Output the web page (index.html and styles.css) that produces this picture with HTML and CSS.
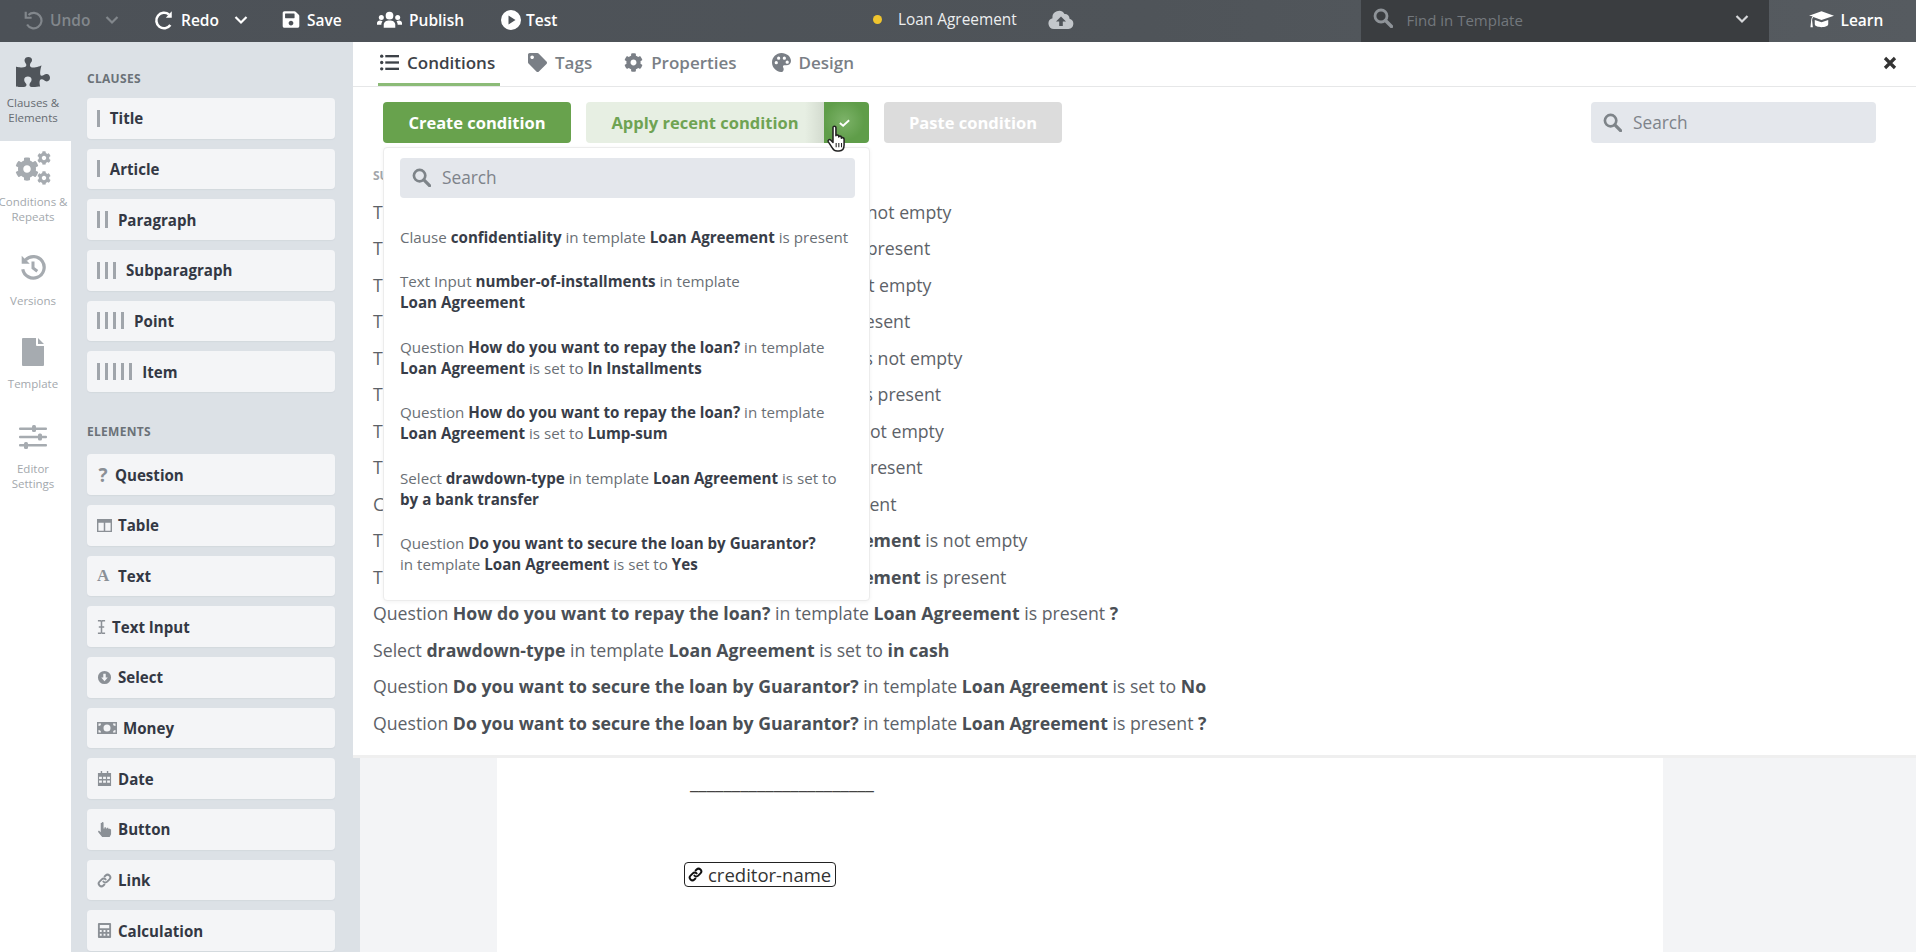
FILE: index.html
```html
<!DOCTYPE html>
<html lang="en">
<head>
<meta charset="utf-8">
<title>Loan Agreement</title>
<link rel="stylesheet" href="styles.css">
</head>
<body>
<svg class="defs" aria-hidden="true">
  <symbol id="i-search" viewBox="0 0 20 20"><circle cx="8" cy="8" r="6" fill="none" stroke="currentColor" stroke-width="2.8"/><path d="M12.5 12.5L18.5 18.5" stroke="currentColor" stroke-width="3.4" stroke-linecap="round"/></symbol>
  <symbol id="i-chev" viewBox="0 0 14 10"><path d="M1.5 2l5.5 5.5L12.500 2" fill="none" stroke="currentColor" stroke-width="2.2"/></symbol>
  <symbol id="i-cog" viewBox="0 0 512 512"><path d="M487.4 315.7l-42.600-24.600c4.300-23.200 4.300-47 0-70.200l42.600-24.600c4.900-2.800 7.100-8.600 5.500-14-11.100-35.600-30-67.800-54.700-94.600-3.800-4.100-10-5.100-14.800-2.300L380.800 110c-17.900-15.400-38.500-27.300-60.800-35.100V25.800c0-5.600-3.900-10.500-9.400-11.700-36.700-8.200-74.300-7.800-109.200 0-5.500 1.200-9.400 6.100-9.400 11.700V75c-22.200 7.900-42.800 19.800-60.800 35.100L88.700 85.500c-4.900-2.800-11-1.900-14.800 2.300-24.700 26.700-43.600 58.900-54.700 94.600-1.700 5.400.6 11.200 5.500 14L67.300 221c-4.300 23.200-4.300 47 0 70.200l-42.600 24.600c-4.900 2.800-7.100 8.600-5.500 14 11.100 35.600 30 67.800 54.700 94.600 3.800 4.100 10 5.100 14.800 2.300l42.600-24.600c17.900 15.400 38.500 27.300 60.800 35.100v49.200c0 5.600 3.900 10.500 9.400 11.700 36.700 8.200 74.300 7.800 109.200 0 5.500-1.200 9.400-6.100 9.400-11.700v-49.200c22.200-7.900 42.800-19.800 60.800-35.100l42.600 24.600c4.900 2.800 11 1.900 14.800-2.300 24.700-26.700 43.600-58.900 54.700-94.600 1.500-5.500-.7-11.300-5.600-14.100zM256 336c-44.100 0-80-35.900-80-80s35.900-80 80-80 80 35.900 80 80-35.900 80-80 80z" fill="currentColor"/></symbol>
  <symbol id="i-link" viewBox="0 0 20 20"><g fill="none" stroke="currentColor" stroke-width="2.600" stroke-linecap="round"><path d="M8.500 11.500a3.600 3.600 0 0 0 5.100 0l3-3a3.600 3.600 0 0 0-5.100-5.100l-1.300 1.300"/><path d="M11.500 8.500a3.600 3.600 0 0 0-5.100 0l-3 3a3.600 3.600 0 0 0 5.100 5.100l1.300-1.300"/></g></symbol>
</svg>

<header class="topbar">
  <div class="tb-group tb-undo">
    <svg class="ic-undo" viewBox="0 0 22 22"><path d="M6 5.500A8.500 8.500 0 1 1 4.500 16" fill="none" stroke="currentColor" stroke-width="2.400"/><path d="M3 2v6.500h6.500" fill="none" stroke="currentColor" stroke-width="2.400"/></svg>
    <span>Undo</span>
    <svg class="ic-chev"><use href="#i-chev"/></svg>
  </div>
  <div class="tb-group tb-redo">
    <svg class="ic-undo" viewBox="0 0 22 22"><path d="M16.500 5A8.500 8.500 0 1 0 18 16.500" fill="none" stroke="currentColor" stroke-width="2.800"/><path d="M19.500 1.500v7H13z" fill="currentColor"/></svg>
    <span>Redo</span>
    <svg class="ic-chev"><use href="#i-chev"/></svg>
  </div>
  <div class="tb-group tb-save">
    <svg class="ic-save" viewBox="0 0 448 512"><path fill="currentColor" d="M433.941 129.941l-83.882-83.882A48 48 0 0 0 316.118 32H48C21.490 32 0 53.490 0 80v352c0 26.510 21.490 48 48 48h352c26.510 0 48-21.490 48-48V163.882a48 48 0 0 0-14.059-33.941zM224 416c-35.346 0-64-28.654-64-64 0-35.346 28.654-64 64-64s64 28.654 64 64c0 35.346-28.654 64-64 64zm96-304.520V212c0 6.627-5.373 12-12 12H76c-6.627 0-12-5.373-12-12V108c0-6.627 5.373-12 12-12h228.520c3.183 0 6.235 1.264 8.485 3.515l3.480 3.480A11.996 11.996 0 0 1 320 111.480z"/></svg>
    <span>Save</span>
  </div>
  <div class="tb-group tb-publish">
    <svg class="ic-users" viewBox="0 0 26 18"><g fill="currentColor"><circle cx="13" cy="4.500" r="4"/><circle cx="4.500" cy="6.500" r="2.600"/><circle cx="21.500" cy="6.500" r="2.600"/><path d="M7 17v-3c0-3 2.500-4.500 6-4.500s6 1.500 6 4.500v3z"/><path d="M0 14v-2c0-1.500 1.500-2.500 3-2.500 1 0 2 .3 2.700 1-.8.8-1.200 2-1.200 3.500zM26 14v-2c0-1.500-1.500-2.500-3-2.500-1 0-2 .3-2.700 1 .8.8 1.200 2 1.200 3.500z"/></g></svg>
    <span>Publish</span>
  </div>
  <div class="tb-group tb-test">
    <svg class="ic-play" viewBox="0 0 20 20"><path fill="currentColor" fill-rule="evenodd" d="M10 0a10 10 0 1 1 0 20a10 10 0 1 1 0-20zM7.500 5.500v9l7-4.500z"/></svg>
    <span>Test</span>
  </div>
  <div class="tb-doc">
    <i class="dot"></i>
    <span class="doc-name">Loan Agreement</span>
    <svg class="ic-cloud" viewBox="0 0 26 20"><path fill="currentColor" fill-rule="evenodd" d="M6 19a5.500 5.500 0 0 1-1.500-10.800A6.500 6.500 0 0 1 16.500 4 4.500 4.500 0 0 1 21.500 8.800 5.200 5.200 0 0 1 20.500 19zM13 6.500l-5 5h3.200v4.500h3.600v-4.500H18z"/></svg>
  </div>
  <div class="tb-find">
    <svg class="ic-find"><use href="#i-search"/></svg>
    <span class="find-text">Find in Template</span>
    <svg class="ic-chev find-chev"><use href="#i-chev"/></svg>
  </div>
  <div class="tb-learn">
    <svg class="ic-cap" viewBox="0 0 26 20"><path fill="currentColor" d="M13 1L26 5.500 13 10 4.500 7c-.8.8-1.200 1.800-1.300 3l.8 7.500H1.500l.8-7.500c.1-1.500.6-2.800 1.500-3.800L0 5.500zM6 10l7 2.400 7-2.400v4.500c0 1.700-3.500 3-7 3s-7-1.300-7-3z"/></svg>
    <span>Learn</span>
  </div>
</header>

<div class="workspace">
  <nav class="rail">
    <div class="rail-item rail-active">
      <svg class="ic-puzzle" viewBox="0 0 576 512"><path fill="currentColor" d="M519.442 288.651c-41.519 0-59.500 31.593-82.058 31.593C377.409 320.244 432 144 432 144s-196.288 80-196.288-3.297c0-35.827 36.288-46.250 36.288-85.985C272 19.216 243.885 0 210.539 0c-34.654 0-66.366 18.891-66.366 56.346 0 41.364 31.711 59.277 31.711 81.750C175.885 207.719 0 166.758 0 166.758v333.237s178.635 41.047 178.635-28.662c0-22.473-40-40.107-40-81.471 0-37.456 29.250-56.346 63.577-56.346 33.673 0 61.788 19.216 61.788 54.717 0 39.735-36.288 50.158-36.288 85.985 0 60.803 129.675 25.730 181.230 25.730 0 0-34.725-120.101 25.827-120.101 35.962 0 46.423 36.152 86.308 36.152C556.712 416 576 387.990 576 354.443c0-34.199-18.962-65.792-56.558-65.792z"/></svg>
      <span>Clauses &amp;<br>Elements</span>
    </div>
    <div class="rail-item rail-conditions">
      <div class="cogs">
        <svg class="cog-big"><use href="#i-cog"/></svg>
        <svg class="cog-a"><use href="#i-cog"/></svg>
        <svg class="cog-b"><use href="#i-cog"/></svg>
      </div>
      <span>Conditions &amp;<br>Repeats</span>
    </div>
    <div class="rail-item rail-versions">
      <svg class="ic-history" viewBox="0 0 26 26"><path d="M6 6.500A10 10 0 1 1 3.500 15" fill="none" stroke="currentColor" stroke-width="3"/><path d="M2.500 2.500v7.500H10z" fill="currentColor"/><path d="M13 8v6l4 3" fill="none" stroke="currentColor" stroke-width="2.800"/></svg>
      <span>Versions</span>
    </div>
    <div class="rail-item rail-template">
      <svg class="ic-file" viewBox="0 0 22 28"><path fill="currentColor" d="M0 1a1 1 0 0 1 1-1h13v7a1 1 0 0 0 1 1h7v19a1 1 0 0 1-1 1H1a1 1 0 0 1-1-1zM16 0l6 6h-6z"/></svg>
      <span>Template</span>
    </div>
    <div class="rail-item rail-settings">
      <svg class="ic-sliders" viewBox="0 0 28 24"><g fill="currentColor"><rect y="2.500" width="28" height="2.400" rx="1"/><rect y="10.800" width="28" height="2.400" rx="1"/><rect y="19" width="28" height="2.400" rx="1"/><rect x="13" y="0" width="4" height="7" rx="1.500"/><rect x="19" y="8.500" width="4" height="7" rx="1.500"/><rect x="5" y="17" width="4" height="7" rx="1.500"/></g></svg>
      <span>Editor<br>Settings</span>
    </div>
  </nav>

  <aside class="palette">
    <h3 class="palette-title">CLAUSES</h3>
    <div class="cards">
      <div class="card"><span class="bars"><i></i></span>Title</div>
      <div class="card"><span class="bars"><i></i></span>Article</div>
      <div class="card"><span class="bars"><i></i><i></i></span>Paragraph</div>
      <div class="card"><span class="bars"><i></i><i></i><i></i></span>Subparagraph</div>
      <div class="card"><span class="bars"><i></i><i></i><i></i><i></i></span>Point</div>
      <div class="card"><span class="bars"><i></i><i></i><i></i><i></i><i></i></span>Item</div>
    </div>
    <h3 class="palette-title title-elements">ELEMENTS</h3>
    <div class="cards">
      <div class="card"><b class="glyph-q">?</b>Question</div>
      <div class="card"><svg class="el-ic" viewBox="0 0 16 14"><path fill="currentColor" fill-rule="evenodd" d="M0 0h16v14H0zM1.500 4v8.500h5.700V4zM8.800 4v8.500h5.700V4z"/></svg>Table</div>
      <div class="card"><b class="glyph-a">A</b>Text</div>
      <div class="card"><svg class="el-ic el-cursor" viewBox="0 0 10 16"><path fill="none" stroke="currentColor" stroke-width="1.700" d="M1 1h3l1 1 1-1h3M5 2v12M1 15h3l1-1 1 1h3M2 8h6"/></svg>Text Input</div>
      <div class="card"><svg class="el-ic" viewBox="0 0 16 16"><path fill="currentColor" fill-rule="evenodd" d="M8 1a7 7 0 1 1 0 14A7 7 0 1 1 8 1zM6.700 4v4H4.500L8 12l3.500-4H9.300V4z"/></svg>Select</div>
      <div class="card"><svg class="el-ic el-money" viewBox="0 0 20 12"><path fill="currentColor" fill-rule="evenodd" d="M0 0h20v12H0zM10 2.500a3.500 3.500 0 1 0 0 7 3.500 3.500 0 0 0 0-7zM1.500 1.500v2.500a2.500 2.500 0 0 0 2.500-2.500zM16 1.500A2.500 2.500 0 0 0 18.500 4V1.500zM1.500 8v2.500H4A2.500 2.500 0 0 0 1.500 8zM18.500 8A2.500 2.500 0 0 0 16 10.500h2.500z"/></svg>Money</div>
      <div class="card"><svg class="el-ic" viewBox="0 0 14 16"><path fill="currentColor" fill-rule="evenodd" d="M3 0h1.500v2h5V0H11v2h3v14H0V2h3zM1.200 6v2.500h3V6zM5.500 6v2.500h3V6zM9.800 6v2.500h3V6zM1.200 10v2.500h3V10zM5.500 10v2.500h3V10zM9.800 10v2.500h3V10z"/></svg>Date</div>
      <div class="card"><svg class="el-ic" viewBox="0 0 14 16"><path fill="currentColor" d="M4 1a1 1 0 0 1 2 0v6h1V5.500h1.500V7h1V6h1.500v1.300h1V6.800L14 8v5l-1.500 3h-8L0 10.500 1 9l2 2V1z"/></svg>Button</div>
      <div class="card"><svg class="el-ic"><use href="#i-link"/></svg>Link</div>
      <div class="card"><svg class="el-ic" viewBox="0 0 14 16"><path fill="currentColor" fill-rule="evenodd" d="M1 0h12a1 1 0 0 1 1 1v14a1 1 0 0 1-1 1H1a1 1 0 0 1-1-1V1a1 1 0 0 1 1-1zM2 2v3.500h10V2zM2 7.500v2h2v-2zM6 7.500v2h2v-2zM10 7.500v2h2v-2zM2 11.500v2h2v-2zM6 11.500v2h2v-2zM10 11.500v2h2v-2z"/></svg>Calculation</div>
    </div>
  </aside>

  <main class="canvas">
    <article class="page">
      <div class="rule-line">______________________</div>
      <div class="chip"><svg class="chip-ic"><use href="#i-link"/></svg>creditor-name</div>
    </article>
  </main>

  <section class="sheet">
    <div class="tabs">
      <div class="tab tab-active">
        <svg class="tab-ic" viewBox="0 0 18 16"><g fill="currentColor"><circle cx="1.600" cy="2" r="1.600"/><circle cx="1.600" cy="8" r="1.600"/><circle cx="1.600" cy="14" r="1.600"/><rect x="5" y=".9" width="13" height="2.200"/><rect x="5" y="6.900" width="13" height="2.200"/><rect x="5" y="12.900" width="13" height="2.200"/></g></svg>
        Conditions
      </div>
      <div class="tab tab-tags">
        <svg class="tab-ic" viewBox="0 0 512 512"><path fill="currentColor" d="M0 252.118V48C0 21.490 21.490 0 48 0h204.118a48 48 0 0 1 33.941 14.059l211.882 211.882c18.745 18.745 18.745 49.137 0 67.882L293.823 497.941c-18.745 18.745-49.137 18.745-67.882 0L14.059 286.059A48 48 0 0 1 0 252.118zM112 64c-26.510 0-48 21.490-48 48s21.490 48 48 48 48-21.490 48-48-21.490-48-48-48z"/></svg>
        Tags
      </div>
      <div class="tab tab-props">
        <svg class="tab-ic"><use href="#i-cog"/></svg>
        Properties
      </div>
      <div class="tab">
        <svg class="tab-ic" viewBox="0 0 20 20"><path fill="currentColor" fill-rule="evenodd" d="M10 0c5.500 0 10 3.800 10 8.500 0 3-2.300 4.500-5 4.500h-2c-1.200 0-1.800 1-1.300 2 .7 1.300.8 2.300.3 3.300-.4 1-1.300 1.700-2.500 1.700C4 19.500 0 15 0 10 0 4.500 4.500 0 10 0zM4.500 8.500a1.700 1.700 0 1 0 0 3.400 1.700 1.700 0 0 0 0-3.400zM7 3.700a1.700 1.700 0 1 0 0 3.400 1.700 1.700 0 0 0 0-3.400zM13 3.700a1.700 1.700 0 1 0 0 3.400 1.700 1.700 0 0 0 0-3.400zM16 8a1.700 1.700 0 1 0 0 3.400A1.700 1.700 0 0 0 16 8z"/></svg>
        Design
      </div>
      <svg class="close" viewBox="0 0 14 14" aria-label="Close"><path d="M2 2l10 10M12 2L2 12" stroke="currentColor" stroke-width="3.200"/></svg>
    </div>

    <div class="toolbar">
      <div class="btn btn-create">Create condition</div>
      <div class="split">
        <div class="btn btn-apply">Apply recent condition</div>
        <div class="btn-caret"><svg viewBox="0 0 14 10"><path d="M2 5l3.500 3L12 2" fill="none" stroke="currentColor" stroke-width="2"/></svg></div>
      </div>
      <div class="btn btn-paste">Paste condition</div>
      <div class="searchbox searchbox-right">
        <svg class="search-ic"><use href="#i-search"/></svg>
        <span>Search</span>
      </div>
    </div>

    <div class="suggest-label">SUGGESTED CONDITIONS</div>
    <ul class="rows">
      <li>Text Input <b>debtor-address</b> in template <b>Loan Agreement</b> is not empty</li>
      <li>Text Input <b>debtor-address</b> in template <b>Loan Agreement</b> is present</li>
      <li>Text Input <b>loan-amount</b> in template <b>Loan Agreement</b> is not empty</li>
      <li>Text Input <b>loan-amount</b> in template <b>Loan Agreement</b> is present</li>
      <li>Text Input <b>guarantor-name</b> in template <b>Loan Agreement</b> is not empty</li>
      <li>Text Input <b>guarantor-name</b> in template <b>Loan Agreement</b> is present</li>
      <li>Text Input <b>creditor-name</b> in template <b>Loan Agreement</b> is not empty</li>
      <li>Text Input <b>creditor-name</b> in template <b>Loan Agreement</b> is present</li>
      <li>Clause <b>confidentiality</b> in template <b>Loan Agreement</b> is present</li>
      <li>Text Input <b>number-of-installments</b> in template <b>Loan Agreement</b> is not empty</li>
      <li>Text Input <b>number-of-installments</b> in template <b>Loan Agreement</b> is present</li>
      <li>Question <b>How do you want to repay the loan?</b> in template <b>Loan Agreement</b> is present <b>?</b></li>
      <li>Select <b>drawdown-type</b> in template <b>Loan Agreement</b> is set to <b>in cash</b></li>
      <li>Question <b>Do you want to secure the loan by Guarantor?</b> in template <b>Loan Agreement</b> is set to <b>No</b></li>
      <li>Question <b>Do you want to secure the loan by Guarantor?</b> in template <b>Loan Agreement</b> is present <b>?</b></li>
    </ul>

    <div class="dropdown">
      <div class="searchbox searchbox-menu">
        <svg class="search-ic"><use href="#i-search"/></svg>
        <span>Search</span>
      </div>
      <p class="recent recent-first">Clause <b>confidentiality</b> in template <b>Loan Agreement</b> is present</p>
      <p class="recent">Text Input <b>number-of-installments</b> in template<br><b>Loan Agreement</b></p>
      <p class="recent">Question <b>How do you want to repay the loan?</b> in template<br><b>Loan Agreement</b> is set to <b>In Installments</b></p>
      <p class="recent">Question <b>How do you want to repay the loan?</b> in template<br><b>Loan Agreement</b> is set to <b>Lump-sum</b></p>
      <p class="recent">Select <b>drawdown-type</b> in template <b>Loan Agreement</b> is set to<br><b>by a bank transfer</b></p>
      <p class="recent">Question <b>Do you want to secure the loan by Guarantor?</b><br>in template <b>Loan Agreement</b> is set to <b>Yes</b></p>
    </div>

    <svg class="cursor" viewBox="0 0 18 24"><path fill="#fff" stroke="#222" stroke-width="1.300" stroke-linejoin="round" d="M6 2.200c0-1.600 2.500-1.600 2.500 0v7c0-1 2.400-1 2.400.3v.7c0-1 2.300-1 2.300.4v.8c0-1 2.300-.8 2.300.7v5.100c0 3-1.500 5.100-4.300 5.100H9.500c-2 0-3-.8-4-2.500L2 14.500c-.9-1.500 1-2.800 2.200-1.500L6 15z"/><path d="M8.700 15.500v3.500M11 15.500v3.500M13.300 15.500v3.500" stroke="#222" stroke-width=".9"/></svg>
  </section>
</div>
</body>
</html>
```
FILE: styles.css
```css
* { box-sizing: border-box; }
html, body { margin: 0; height: 100%; }
body {
  width: 1916px;
  height: 952px;
  overflow: hidden;
  font-family: "Open Sans", "Noto Sans", sans-serif;
  color: #555a60;
  background: #fff;
  display: flex;
  flex-direction: column;
}
.defs { position: absolute; width: 0; height: 0; }
p, ul, h3 { margin: 0; padding: 0; }

/* top bar */
.topbar {
  flex: 0 0 42px;
  display: flex;
  align-items: stretch;
  padding-left: 23px;
  background: linear-gradient(90deg, #4c5157 0%, #4f5459 60%, #565b60 100%);
  color: #fff;
  font-size: 15.500px;
  font-weight: 600;
}
.tb-group { display: flex; align-items: center; gap: 7px; padding-bottom: 3px; }
.tb-undo { color: #82878c; width: 131px; }
.tb-redo { width: 128px; }
.tb-save { width: 95px; }
.tb-publish { width: 124px; }
.tb-test { width: 372px; gap: 5px; }
.ic-undo { width: 20px; height: 20px; }
.ic-chev { width: 14px; height: 10px; margin-left: 8px; }
.ic-save { width: 18px; height: 19px; }
.ic-users { width: 25px; height: 18px; }
.ic-play { width: 20px; height: 20px; }
.tb-doc { display: flex; align-items: center; width: 487.500px; padding-bottom: 3px; font-weight: 400; font-size: 15.400px; color: #eceeef; }
.dot { width: 9px; height: 9px; border-radius: 50%; background: #f0c52e; margin-right: 16px; }
.doc-name { margin-right: 31px; }
.ic-cloud { width: 26px; height: 20px; color: #c3c7cb; }
.tb-find {
  width: 408px;
  display: flex;
  align-items: center;
  padding: 0 0 3px 12px;
  background: #3a3d40;
  color: #73787d;
  font-weight: 400;
  font-size: 15px;
}
.ic-find { width: 20px; height: 20px; color: #8e9398; margin-top: -3px; }
.find-text { margin-left: 14px; margin-top: 1px; }
.find-chev { margin-left: auto; margin-right: 20px; color: #d6d8da; margin-top: -2px; }
.tb-learn { display: flex; align-items: center; gap: 7px; padding: 0 0 3px 40px; }
.ic-cap { width: 25px; height: 20px; }

/* workspace */
.workspace { position: relative; flex: 1; display: flex; min-height: 0; }

.rail { flex: 0 0 71px; width: 71px; min-width: 0; background: #fff; display: flex; flex-direction: column; overflow: hidden; }
.rail-item {
  display: flex;
  flex-direction: column;
  align-items: center;
  padding-right: 5px;
  font-size: 11.500px;
  line-height: 15.300px;
  color: #a3a8ad;
  text-align: center;
  white-space: nowrap;
}
.rail-active { height: 99px; padding-top: 13px; background: #dce1e6; color: #666b71; }
.ic-puzzle { width: 34px; height: 34px; color: #50555b; margin-bottom: 6px; flex: none; }
.rail-conditions { padding-top: 10px; }
.cogs { position: relative; width: 36px; height: 34px; color: #a6abb0; margin-bottom: 8.500px; flex: none; }
.cog-big { position: absolute; left: 0; top: 6px; width: 24px; height: 24px; }
.cog-a { position: absolute; right: 0; top: 0; width: 14px; height: 14px; }
.cog-b { position: absolute; right: 0; bottom: 0; width: 14px; height: 14px; }
.rail-versions { padding-top: 29px; }
.ic-history { width: 28px; height: 28px; color: #a6abb0; margin-bottom: 12px; flex: none; }
.rail-template { padding-top: 30px; }
.ic-file { width: 22px; height: 28px; color: #a6abb0; margin-bottom: 10px; flex: none; }
.rail-settings { padding-top: 33px; }
.ic-sliders { width: 28px; height: 24px; color: #a6abb0; margin-bottom: 12px; flex: none; }

.palette {
  flex: 0 0 289px;
  padding: 16px 25px 0 16px;
  background: #dce1e6;
  overflow: hidden;
}
.palette-title {
  font-size: 12px;
  line-height: 18px;
  font-weight: 700;
  color: #6b7278;
  letter-spacing: .3px;
  margin: 12px 0 10px;
}
.title-elements { margin: 31.500px 0 13px; }
.cards { display: flex; flex-direction: column; gap: 10px; }
.card {
  flex: 0 0 40.670px;
  height: 40.670px;
  width: 248px;
  display: flex;
  align-items: center;
  gap: 6px;
  padding-left: 10px;
  border-radius: 4px;
  background: #f4f5f7;
  color: #333844;
  font-size: 15.100px;
  font-weight: 700;
  box-shadow: 0 1px 1px rgba(120,130,140,.08);
}
.bars { display: flex; gap: 5.300px; margin-right: 4px; }
.bars i { width: 2.800px; height: 17px; background: #a0a5ab; }
.el-ic { width: 15px; height: 15px; color: #8b9096; flex: none; }
.el-cursor { width: 9px; height: 16px; }
.el-money { width: 20px; height: 12px; }
.glyph-q { color: #8b9096; font-size: 19px; width: 12px; text-align: center; font-weight: 700; }
.glyph-a { color: #8b9096; font-size: 17px; width: 15px; font-family: "Liberation Serif", serif; font-weight: 700; }

.canvas { flex: 1; background: #f3f4f6; display: flex; padding-left: 137px; padding-top: 716px; }
.page { width: 1166px; height: 200px; background: #fff; padding: 14px 0 0 192px; color: #333; }
.rule-line { font-size: 19.100px; line-height: 20px; color: #444; margin-left: 1px; white-space: nowrap; }
.chip {
  display: inline-flex;
  align-items: center;
  gap: 5px;
  width: 152px;
  height: 25px;
  margin: 70px 0 0 -5px;
  padding-left: 3px;
  border: 1px solid #222;
  border-radius: 4px;
  font-size: 18.500px;
  white-space: nowrap;
  color: #333;
}
.chip-ic { width: 15px; height: 15px; color: #111; flex: none; }

/* overlay sheet */
.sheet {
  position: absolute;
  left: 353px;
  top: 0;
  right: 0;
  height: 716px;
  background: #fff;
  border-bottom: 3px solid #efefef;
  padding: 0 40px 0 20px;
}
.tabs {
  height: 45px;
  margin: 0 -40px 0 -20px;
  padding-left: 25px;
  border-bottom: 1.500px solid #e6e7e8;
  display: flex;
  position: relative;
}
.tab {
  display: flex;
  align-items: center;
  gap: 8px;
  height: 44px;
  margin-right: 33px;
  padding: 0 2px 3px;
  font-size: 17px;
  font-weight: 600;
  color: #7a7f86;
  white-space: nowrap;
}
.tab-active { color: #3d4248; width: 122px; margin-right: 26px; box-shadow: inset 0 -3px 0 #8cbb77; }
.tab-tags { margin-right: 28px; }
.tab-props { margin-right: 31px; }
.tab-ic { width: 19px; height: 19px; flex: none; }
.close { position: absolute; right: 19px; top: 14px; width: 14px; height: 14px; color: #333; }

.toolbar { display: flex; gap: 15px; margin: 15px 0 0 10px; height: 41px; }
.btn {
  height: 41px;
  display: flex;
  align-items: center;
  justify-content: center;
  font-size: 16.500px;
  font-weight: 700;
  border-radius: 4px;
  white-space: nowrap;
}
.btn-create { width: 188px; background: #68a24d; color: #fff; }
.split { display: flex; width: 283px; }
.btn-apply { width: 238px; background: linear-gradient(90deg, #e7efe3 92%, #d3dbcf 100%); color: #6fa353; border-radius: 4px 0 0 4px; }
.btn-caret {
  flex: 1;
  display: flex;
  align-items: center;
  justify-content: center;
  padding-right: 4px;
  background: radial-gradient(circle at 45% 45%, #7cb268 0%, #5f9d49 60%);
  color: #fff;
  border-radius: 0 4px 4px 0;
}
.btn-caret svg { width: 13px; height: 10px; }
.btn-paste { width: 178px; background: #dcdcdc; color: #fff; margin-left: 0; }
.searchbox {
  display: flex;
  align-items: center;
  gap: 11px;
  background: #e4e7ec;
  border-radius: 4px;
  color: #7e838a;
  font-size: 17.300px;
  padding-left: 12px;
}
.searchbox-right { width: 285px; height: 41px; margin-left: auto; }
.search-ic { width: 19px; height: 19px; color: #7e8489; }
.searchbox-menu { width: 455px; height: 40px; padding-bottom: 2px; }

.suggest-label { margin: 24px 0 8.500px; font-size: 12px; line-height: 18px; font-weight: 700; color: #a3a7ab; }
.rows { list-style: none; }
.rows li { height: 36.500px; line-height: 36.500px; font-size: 17.700px; color: #5d6268; white-space: nowrap; }
.rows b { font-weight: 700; color: #4a4f55; }

.dropdown {
  position: absolute;
  left: 30px;
  top: 105px;
  width: 487px;
  height: 454px;
  padding: 10px 15px 0 16px;
  background: #fff;
  border: 1px solid #ececec;
  border-radius: 4px;
  box-shadow: 0 1px 4px rgba(0,0,0,.05);
}
.recent { margin-top: 23.400px; font-size: 15.150px; line-height: 21px; color: #6a6f75; white-space: nowrap; }
.recent b { font-weight: 700; color: #383d48; }
.recent-first { margin-top: 29px; }

.cursor { position: absolute; left: 473px; top: 83px; width: 21px; height: 28px; }
```
